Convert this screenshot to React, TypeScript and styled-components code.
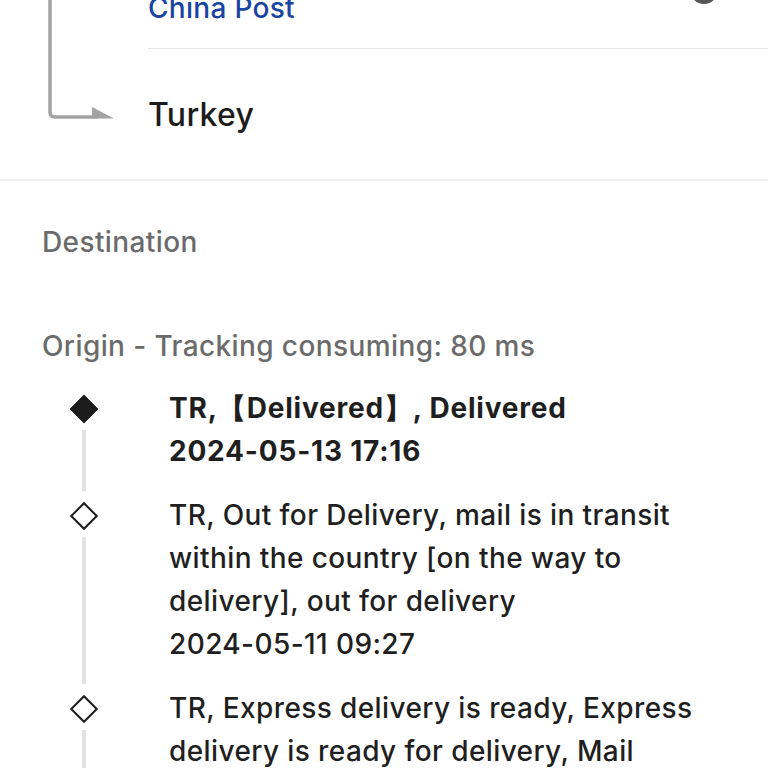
import styled, { createGlobalStyle } from 'styled-components';

type Event = {
  text: string;
  time: string;
  current?: boolean;
};

const events: Event[] = [
  { text: 'TR,【Delivered】, Delivered', time: '2024-05-13 17:16', current: true },
  {
    text: 'TR, Out for Delivery, mail is in transit within the country [on the way to delivery], out for delivery',
    time: '2024-05-11 09:27',
  },
  {
    text: 'TR, Express delivery is ready, Express delivery is ready for delivery, Mail delivered to the recipient',
    time: '2024-05-10 14:02',
  },
];

export default function App() {
  return (
    <>
      <GlobalStyle />
      <Page>
        <RouteCard>
          <RouteArrow>
            <svg width="148" height="200" viewBox="0 0 148 200">
              <path
                d="M50 0 V134 Q50 139 55 139 H98"
                fill="none"
                stroke="#a3a3a3"
                strokeWidth="3.5"
              />
              <polygon points="92,129 114,140.5 92,140.5" fill="#a3a3a3" />
            </svg>
          </RouteArrow>
          <RouteBody>
            <CarrierRow>
              <Carrier>China Post</Carrier>
              <CarrierBadge />
            </CarrierRow>
            <Divider />
            <Country>Turkey</Country>
          </RouteBody>
        </RouteCard>

        <Details>
          <Label>Destination</Label>
          <OriginLabel>Origin - Tracking consuming: 80 ms</OriginLabel>
          <Timeline>
            {events.map((e, i) => (
              <Item key={i}>
                <Marker>
                  <Diamond $filled={e.current} />
                  <Rail />
                </Marker>
                <Text $bold={e.current}>
                  {e.text}
                  <br />
                  {e.time}
                </Text>
              </Item>
            ))}
          </Timeline>
        </Details>
      </Page>
    </>
  );
}

const GlobalStyle = createGlobalStyle`
  html, body {
    margin: 0;
    padding: 0;
    background: #fff;
  }
  body {
    font-family: Inter, "Noto Sans", "Liberation Sans", sans-serif;
    -webkit-font-smoothing: antialiased;
  }
`;

const Page = styled.div`
  width: 768px;
  height: 768px;
  overflow: hidden;
`;

const RouteCard = styled.section`
  display: flex;
  margin-top: -22px;
  border-bottom: 2px solid #eeeeee;
`;

const RouteArrow = styled.div`
  width: 148px;
  flex-shrink: 0;
  display: flex;

  & > svg {
    display: block;
  }
`;

const RouteBody = styled.div`
  flex: 1;
  display: flex;
  flex-direction: column;
`;

const CarrierRow = styled.div`
  height: 70px;
  display: flex;
  align-items: center;
  justify-content: space-between;
  padding-right: 50px;
`;

const Carrier = styled.span`
  font-size: 28px;
  letter-spacing: 0.3px;
  font-weight: 500;
  color: #1a44a2;
  margin-top: -10px;
`;

const CarrierBadge = styled.span`
  align-self: flex-start;
  width: 28px;
  height: 28px;
  margin-top: -2px;
  border-radius: 50%;
  background: #555555;
`;

const Divider = styled.div`
  height: 1px;
  background: #e6e6e6;
`;

const Country = styled.div`
  height: 130px;
  display: flex;
  align-items: center;
  font-size: 32px;
  letter-spacing: 0.3px;
  font-weight: 500;
  color: #1c1c1c;
`;

const Details = styled.section`
  padding: 0 42px;
`;

const Label = styled.div`
  font-size: 28px;
  letter-spacing: 0.4px;
  font-weight: 500;
  color: #6b6b6b;
  line-height: 40px;
  margin-top: 41px;
`;

const OriginLabel = styled(Label)`
  margin-top: 64px;
`;

const Timeline = styled.ol`
  list-style: none;
  margin: 21px 0 0;
  padding: 0;
`;

const Item = styled.li`
  display: flex;
  gap: 43px;
  padding-bottom: 21px;
`;

const Marker = styled.div`
  width: 84px;
  flex-shrink: 0;
  display: flex;
  flex-direction: column;
  align-items: center;
  padding-top: 11px;
  margin-bottom: -18px;
`;

const Diamond = styled.span<{ $filled?: boolean }>`
  width: 20px;
  height: 20px;
  margin: 1px 0;
  transform: rotate(45deg);
  box-sizing: border-box;
  border: 2px solid #1c1c1c;
  background: ${({ $filled }) => ($filled ? '#1c1c1c' : '#fff')};
`;

const Rail = styled.span`
  flex: 1;
  width: 4px;
  margin-top: 10px;
  background: #e2e2e2;
`;

const Text = styled.div<{ $bold?: boolean }>`
  flex: 1;
  font-size: 28px;
  letter-spacing: ${({ $bold }) => ($bold ? '0.8px' : '0.4px')};
  line-height: 43px;
  font-weight: ${({ $bold }) => ($bold ? 700 : 500)};
  color: #1f1f1f;
`;
